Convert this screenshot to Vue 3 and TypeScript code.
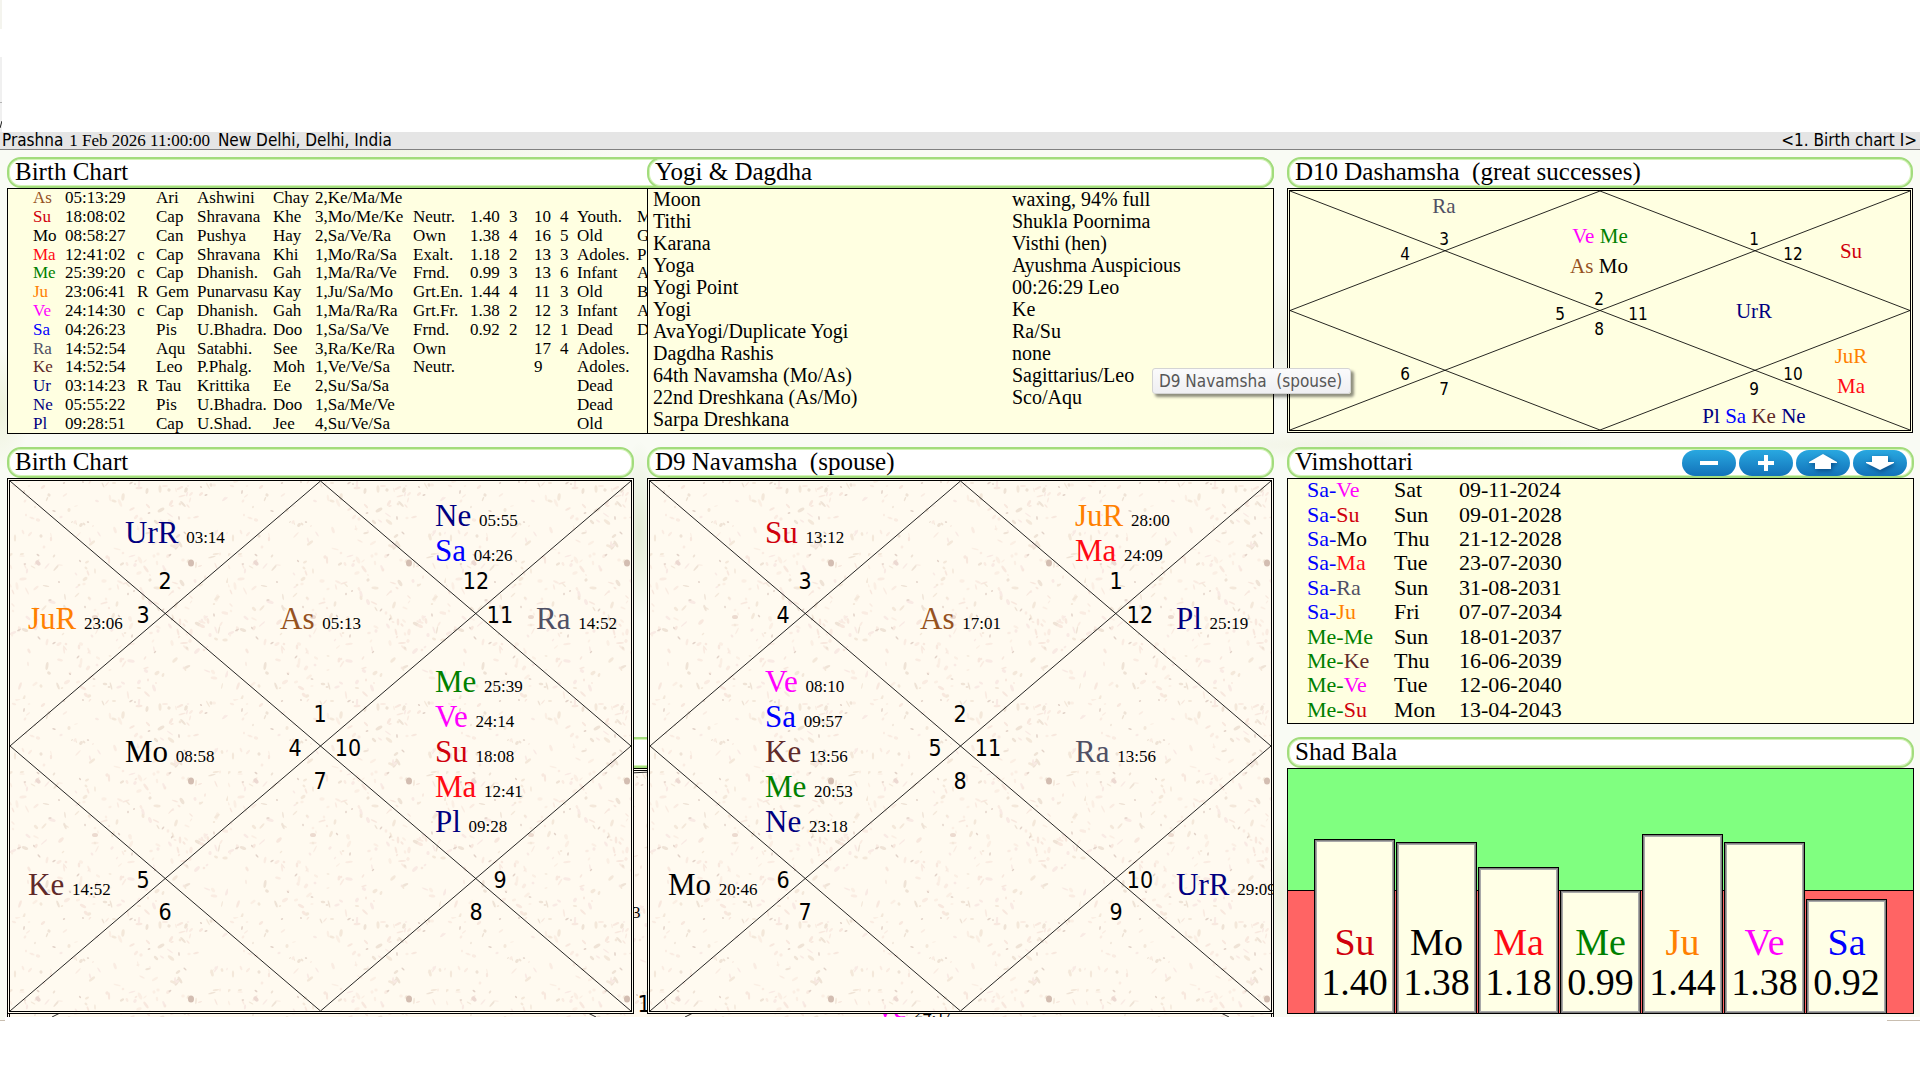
<script setup lang="ts">
type Graha = 'As' | 'Su' | 'Mo' | 'Ma' | 'Me' | 'Ju' | 'Ve' | 'Sa' | 'Ra' | 'Ke' | 'Ur' | 'Ne' | 'Pl'

interface Label {
  x: number
  y: number
  parts: { name: string; degree?: string }[]
}

interface Chart {
  title: string
  area: string
  size: 'large' | 'small'
  lagna: number
  labels: Label[]
}

const planetRows: string[][] = [
  ['As', '05:13:29', '', 'Ari', 'Ashwini', 'Chay', '2,Ke/Ma/Me', '', '', '', '', '', '', ''],
  ['Su', '18:08:02', '', 'Cap', 'Shravana', 'Khe', '3,Mo/Me/Ke', 'Neutr.', '1.40', '3', '10', '4', 'Youth.', 'M'],
  ['Mo', '08:58:27', '', 'Can', 'Pushya', 'Hay', '2,Sa/Ve/Ra', 'Own', '1.38', '4', '16', '5', 'Old', 'G'],
  ['Ma', '12:41:02', 'c', 'Cap', 'Shravana', 'Khi', '1,Mo/Ra/Sa', 'Exalt.', '1.18', '2', '13', '3', 'Adoles.', 'P'],
  ['Me', '25:39:20', 'c', 'Cap', 'Dhanish.', 'Gah', '1,Ma/Ra/Ve', 'Frnd.', '0.99', '3', '13', '6', 'Infant', 'A'],
  ['Ju', '23:06:41', 'R', 'Gem', 'Punarvasu', 'Kay', '1,Ju/Sa/Mo', 'Grt.En.', '1.44', '4', '11', '3', 'Old', 'B'],
  ['Ve', '24:14:30', 'c', 'Cap', 'Dhanish.', 'Gah', '1,Ma/Ra/Ra', 'Grt.Fr.', '1.38', '2', '12', '3', 'Infant', 'A'],
  ['Sa', '04:26:23', '', 'Pis', 'U.Bhadra.', 'Doo', '1,Sa/Sa/Ve', 'Frnd.', '0.92', '2', '12', '1', 'Dead', 'D'],
  ['Ra', '14:52:54', '', 'Aqu', 'Satabhi.', 'See', '3,Ra/Ke/Ra', 'Own', '', '', '17', '4', 'Adoles.', ''],
  ['Ke', '14:52:54', '', 'Leo', 'P.Phalg.', 'Moh', '1,Ve/Ve/Sa', 'Neutr.', '', '', '9', '', 'Adoles.', ''],
  ['Ur', '03:14:23', 'R', 'Tau', 'Krittika', 'Ee', '2,Su/Sa/Sa', '', '', '', '', '', 'Dead', ''],
  ['Ne', '05:55:22', '', 'Pis', 'U.Bhadra.', 'Doo', '1,Sa/Me/Ve', '', '', '', '', '', 'Dead', ''],
  ['Pl', '09:28:51', '', 'Cap', 'U.Shad.', 'Jee', '4,Su/Ve/Sa', '', '', '', '', '', 'Old', ''],
]

const yogiRows: [string, string][] = [
  ['Moon', 'waxing, 94% full'],
  ['Tithi', 'Shukla Poornima'],
  ['Karana', 'Visthi (hen)'],
  ['Yoga', 'Ayushma Auspicious'],
  ['Yogi Point', '00:26:29 Leo'],
  ['Yogi', 'Ke'],
  ['AvaYogi/Duplicate Yogi', 'Ra/Su'],
  ['Dagdha Rashis', 'none'],
  ['64th Navamsha (Mo/As)', 'Sagittarius/Leo'],
  ['22nd Dreshkana (As/Mo)', 'Sco/Aqu'],
  ['Sarpa Dreshkana', ''],
]

const dashas: { major: Graha; minor: Graha; day: string; date: string }[] = [
  { major: 'Sa', minor: 'Ve', day: 'Sat', date: '09-11-2024' },
  { major: 'Sa', minor: 'Su', day: 'Sun', date: '09-01-2028' },
  { major: 'Sa', minor: 'Mo', day: 'Thu', date: '21-12-2028' },
  { major: 'Sa', minor: 'Ma', day: 'Tue', date: '23-07-2030' },
  { major: 'Sa', minor: 'Ra', day: 'Sun', date: '31-08-2031' },
  { major: 'Sa', minor: 'Ju', day: 'Fri', date: '07-07-2034' },
  { major: 'Me', minor: 'Me', day: 'Sun', date: '18-01-2037' },
  { major: 'Me', minor: 'Ke', day: 'Thu', date: '16-06-2039' },
  { major: 'Me', minor: 'Ve', day: 'Tue', date: '12-06-2040' },
  { major: 'Me', minor: 'Su', day: 'Mon', date: '13-04-2043' },
]

const strengths: { graha: Graha; value: number }[] = [
  { graha: 'Su', value: 1.4 },
  { graha: 'Mo', value: 1.38 },
  { graha: 'Ma', value: 1.18 },
  { graha: 'Me', value: 0.99 },
  { graha: 'Ju', value: 1.44 },
  { graha: 'Ve', value: 1.38 },
  { graha: 'Sa', value: 0.92 },
]
const strengthMax = 1.968

const hint = 'D9 Navamsha  (spouse)'

/* Chart coordinates are given on these canvases and drawn as percentages. */
const canvas = { large: { w: 621, h: 530 }, small: { w: 620, h: 239 } }

/* Number positions of houses 1 to 12. */
const houseSlots: Record<'large' | 'small', [number, number][]> = {
  large: [
    [310, 241], [155, 108], [133, 142], [285, 275], [133, 407], [155, 439],
    [310, 308], [466, 439], [490, 407], [338, 275], [490, 142], [466, 108],
  ],
  small: [
    [309, 114], [154, 54], [115, 69], [270, 129], [115, 189], [154, 204],
    [309, 144], [464, 204], [503, 189], [348, 129], [503, 69], [464, 54],
  ],
}

const one = (x: number, y: number, name: string, degree: string): Label => ({ x, y, parts: [{ name, degree }] })
const group = (x: number, y: number, ...names: string[]): Label => ({ x, y, parts: names.map((name) => ({ name })) })

const charts: Chart[] = [
  {
    title: 'Birth Chart',
    area: 'rashi',
    size: 'large',
    lagna: 1,
    labels: [
      one(115, 62, 'UrR', '03:14'),
      one(425, 45, 'Ne', '05:55'),
      one(425, 80, 'Sa', '04:26'),
      one(18, 148, 'JuR', '23:06'),
      one(270, 148, 'As', '05:13'),
      one(526, 148, 'Ra', '14:52'),
      one(425, 211, 'Me', '25:39'),
      one(425, 246, 'Ve', '24:14'),
      one(425, 281, 'Su', '18:08'),
      one(425, 316, 'Ma', '12:41'),
      one(425, 351, 'Pl', '09:28'),
      one(115, 281, 'Mo', '08:58'),
      one(18, 414, 'Ke', '14:52'),
    ],
  },
  {
    title: 'D9 Navamsha  (spouse)',
    area: 'navamsha',
    size: 'large',
    lagna: 2,
    labels: [
      one(115, 62, 'Su', '13:12'),
      one(425, 45, 'JuR', '28:00'),
      one(425, 80, 'Ma', '24:09'),
      one(270, 148, 'As', '17:01'),
      one(526, 148, 'Pl', '25:19'),
      one(115, 211, 'Ve', '08:10'),
      one(115, 246, 'Sa', '09:57'),
      one(115, 281, 'Ke', '13:56'),
      one(115, 316, 'Me', '20:53'),
      one(115, 351, 'Ne', '23:18'),
      one(425, 281, 'Ra', '13:56'),
      one(18, 414, 'Mo', '20:46'),
      one(526, 414, 'UrR', '29:09'),
    ],
  },
  {
    title: 'D10 Dashamsha  (great successes)',
    area: 'dashamsha',
    size: 'small',
    lagna: 2,
    labels: [
      group(154, 22, 'Ra'),
      group(310, 52, 'Ve', 'Me'),
      group(309, 82, 'As', 'Mo'),
      group(561, 67, 'Su'),
      group(464, 127, 'UrR'),
      group(561, 172, 'JuR'),
      group(561, 202, 'Ma'),
      group(464, 232, 'Pl', 'Sa', 'Ke', 'Ne'),
    ],
  },
]

const px = (chart: Chart, x: number) => `${(x / canvas[chart.size].w) * 100}%`
const py = (chart: Chart, y: number) => `${(y / canvas[chart.size].h) * 100}%`
const sign = (chart: Chart, house: number) => ((chart.lagna - 1 + house) % 12) + 1
const tone = (name: string) => `g-${name.slice(0, 2).toLowerCase()}`

const chartLines: [string, string, string, string][] = [
  ['0%', '0%', '100%', '100%'],
  ['100%', '0%', '0%', '100%'],
  ['50%', '0%', '100%', '50%'],
  ['100%', '50%', '50%', '100%'],
  ['50%', '100%', '0%', '50%'],
  ['0%', '50%', '50%', '0%'],
]

/* Speckles of the stone tile, the same on every load. */
const tile = 218
let seed = 71
const next = () => {
  seed = (seed * 16807) % 2147483647
  return seed / 2147483647
}
const inks = ['#faece2', '#f8e8de', '#fbefe4', '#f4e8da', '#f9eae4', '#efe3d6']
const specks = Array.from({ length: 330 }, () => ({
  x: Math.round(next() * tile),
  y: Math.round(next() * tile),
  rx: 1 + next() * 3,
  ry: 0.6 + next() * 1.1,
  turn: Math.round(next() * 180),
  ink: inks[Math.floor(next() * inks.length)],
}))
const grains = Array.from({ length: 34 }, () => ({
  x: Math.round(next() * tile),
  y: Math.round(next() * tile),
  rx: 0.8 + next() * 1.4,
  turn: Math.round(next() * 180),
}))
</script>

<template>
  <div class="window">
    <div class="top">
      <div class="top-sliver">
        <svg width="2" height="8" viewBox="0 0 2 8"><path d="M0 8L2 1" stroke="#222" /></svg>
      </div>
    </div>

    <div class="status">
      <span>Prashna</span>
      <time class="serif">1 Feb 2026 11:00:00</time>
      <span>New Delhi, Delhi, India</span>
      <span class="page-name">&lt;1. Birth chart I&gt;</span>
    </div>

    <svg class="defs" width="0" height="0" aria-hidden="true">
      <defs>
        <pattern id="stone" :width="tile" :height="tile" patternUnits="userSpaceOnUse">
          <rect :width="tile" :height="tile" fill="#fffaf0" />
          <ellipse
            v-for="(s, i) in specks"
            :key="i"
            :cx="s.x"
            :cy="s.y"
            :rx="s.rx"
            :ry="s.ry"
            :fill="s.ink"
            :transform="`rotate(${s.turn} ${s.x} ${s.y})`"
          />
          <ellipse
            v-for="(s, i) in grains"
            :key="`g${i}`"
            :cx="s.x"
            :cy="s.y"
            :rx="s.rx"
            ry="0.8"
            fill="#e2d2c8"
            :transform="`rotate(${s.turn} ${s.x} ${s.y})`"
          />
          <ellipse cx="181" cy="82" rx="3" ry="3.5" fill="#d3bdb1" />
          <ellipse cx="28" cy="82" rx="3" ry="2" fill="#ecd9d2" transform="rotate(50 28 82)" />
          <ellipse cx="85" cy="136" rx="3" ry="2" fill="#ecdacf" />
        </pattern>
      </defs>
    </svg>

    <main class="board">
      <section class="panel planets">
        <h2 class="title">Birth Chart</h2>
        <div class="body cream">
          <table class="planet-table">
            <colgroup>
              <col class="c-name" /><col class="c-deg" /><col class="c-flag" /><col class="c-sign" />
              <col class="c-nak" /><col class="c-syl" /><col class="c-lord" /><col class="c-dig" />
              <col class="c-bala" /><col class="c-kar" /><col class="c-pts" /><col class="c-pts2" />
              <col class="c-age" /><col />
            </colgroup>
            <tbody>
              <tr v-for="row in planetRows" :key="row[0]">
                <td v-for="(cell, i) in row" :key="i" :class="i === 0 ? tone(cell) : ''">{{ cell }}</td>
              </tr>
            </tbody>
          </table>
        </div>
      </section>

      <section class="panel yogi">
        <h2 class="title">Yogi &amp; Dagdha</h2>
        <div class="body cream">
          <table class="yogi-table">
            <tbody>
              <tr v-for="[name, value] in yogiRows" :key="name">
                <td>{{ name }}</td>
                <td>{{ value }}</td>
              </tr>
            </tbody>
          </table>
        </div>
      </section>

      <section class="panel covered">
        <div class="title"></div>
        <div class="body double">
          <svg class="chart" aria-hidden="true">
            <rect width="100%" height="100%" fill="url(#stone)" />
            <text class="degree" x="622" y="147">3</text>
            <text class="house" x="634" y="241">1</text>
            <text class="graha g-ve" x="864" y="247">Ve <tspan class="degree">24:17</tspan></text>
            <path class="lines" d="M42 246L50 242M578 242L586 246M675 246L683 242M1211 242L1219 246M620 2L640 1" />
          </svg>
        </div>
      </section>

      <section v-for="chart in charts" :key="chart.title" class="panel" :class="chart.area">
        <h2 class="title">{{ chart.title }}</h2>
        <div class="body double">
          <svg class="chart" :class="chart.size" role="img" :aria-label="chart.title">
            <rect v-if="chart.size === 'large'" width="100%" height="100%" fill="url(#stone)" />
            <g class="lines">
              <line v-for="(l, i) in chartLines" :key="i" :x1="l[0]" :y1="l[1]" :x2="l[2]" :y2="l[3]" />
            </g>
            <text
              v-for="([x, y], i) in houseSlots[chart.size]"
              :key="i"
              class="house"
              :x="px(chart, x)"
              :y="py(chart, y)"
            >{{ sign(chart, i) }}</text>
            <text
              v-for="(label, i) in chart.labels"
              :key="`l${i}`"
              class="graha"
              :x="px(chart, label.x)"
              :y="py(chart, label.y)"
            ><template v-for="(part, j) in label.parts" :key="j"><tspan :class="tone(part.name)">{{ (j > 0 ? ' ' : '') + part.name }}</tspan><template v-if="part.degree">{{ ' ' }}<tspan class="degree">{{ part.degree }}</tspan></template></template></text>
          </svg>
        </div>
      </section>

      <section class="panel dasha">
        <div class="title">
          <h2>Vimshottari</h2>
          <div class="tools">
            <button type="button" aria-label="Collapse">
              <svg viewBox="0 0 54 26"><path d="M18 11h18v4H18z" /></svg>
            </button>
            <button type="button" aria-label="Expand">
              <svg viewBox="0 0 54 26"><path d="M25 5h4v6h6v4h-6v6h-4v-6h-6v-4h6z" /></svg>
            </button>
            <button type="button" aria-label="Previous">
              <svg class="raised" viewBox="0 0 54 26"><path d="M27 4l14 8v1h-6v6H19v-6h-6v-1z" /></svg>
            </button>
            <button type="button" aria-label="Next">
              <svg class="raised" viewBox="0 0 54 26"><path d="M19 6h16v6h6v1l-14 7-14-7v-1h6z" /></svg>
            </button>
          </div>
        </div>
        <div class="body cream">
          <table class="dasha-table">
            <tbody>
              <tr v-for="d in dashas" :key="d.date">
                <td><span :class="tone(d.major)">{{ d.major }}-</span><span :class="tone(d.minor)">{{ d.minor }}</span></td>
                <td>{{ d.day }}</td>
                <td>{{ d.date }}</td>
              </tr>
            </tbody>
          </table>
        </div>
      </section>

      <section class="panel bala">
        <h2 class="title">Shad Bala</h2>
        <div class="body bars">
          <div
            v-for="s in strengths"
            :key="s.graha"
            class="bar"
            :style="{ height: `${(s.value / strengthMax) * 100}%` }"
          >
            <span :class="tone(s.graha)">{{ s.graha }}</span>
            <span>{{ s.value.toFixed(2) }}</span>
          </div>
        </div>
      </section>

      <div class="tooltip" role="tooltip">{{ hint }}</div>
    </main>

    <div class="tail"><i></i><i></i></div>
  </div>
</template>

<style>
body {
  margin: 0;
  background: #fff;
}
</style>

<style scoped>
.window {
  font-family: 'Liberation Serif', 'Times New Roman', serif;
  color: #000;
  background: #fff;
}

.top {
  height: 132px;
}

.top-sliver {
  display: flex;
  align-items: flex-end;
  box-sizing: border-box;
  width: 2px;
  height: 132px;
  padding-bottom: 4px;
  background: linear-gradient(#f4f4ee 29px, #fff 29px 57px, #f0f0f0 57px 102px, #b4b4b4 102px 103px, #f0f0f0 103px);
}

.status {
  display: flex;
  align-items: center;
  height: 17px;
  padding: 0 3px 0 2px;
  border-bottom: 1px solid #808080;
  background: #e5e5e5;
  font-family: 'DejaVu Sans Condensed', 'Noto Sans', sans-serif;
  font-size: 17px;
  line-height: 17px;
  white-space: pre;
}

.status .serif {
  margin: 0 8px 0 6px;
  font-family: 'Liberation Serif', serif;
  font-size: 17px;
}

.page-name {
  margin-left: auto;
}

.defs {
  position: absolute;
}

.board {
  position: relative;
  display: grid;
  grid-template-columns: repeat(3, minmax(0, 1fr));
  grid-template-rows: repeat(3, 277px);
  gap: 13px;
  padding: 7px 6px 3px 7px;
  background:
    radial-gradient(ellipse 30px 60px at 0 30%, #eef3dc, transparent),
    radial-gradient(ellipse 20px 90px at 33.3% 44%, #e2ead4, transparent),
    radial-gradient(ellipse 24px 70px at 66.7% 22%, #eef1e4, transparent),
    radial-gradient(ellipse 24px 80px at 66.7% 86%, #edf2e0, transparent),
    radial-gradient(ellipse 240px 16px at 20% 0, #f1f5e4, transparent),
    radial-gradient(ellipse 260px 16px at 70% 34%, #f2f4e6, transparent),
    #f9fbf4;
}

.panel {
  display: flex;
  flex-direction: column;
  min-width: 0;
  z-index: 1;
}

.planets {
  grid-area: 1 / 1 / 2 / 3;
}

.yogi {
  grid-area: 1 / 2 / 2 / 3;
}

.dashamsha {
  grid-area: 1 / 3 / 2 / 4;
  margin: 0 1px 1px 0;
}

.rashi {
  grid-area: 2 / 1 / 4 / 2;
}

.navamsha {
  grid-area: 2 / 2 / 4 / 3;
}

.dasha {
  grid-area: 2 / 3 / 3 / 4;
}

.bala {
  grid-area: 3 / 3 / 4 / 4;
}

.covered {
  grid-area: 3 / 1 / 4 / 3;
  margin-bottom: -3px;
  z-index: 0;
}

.title {
  box-sizing: border-box;
  display: flex;
  align-items: center;
  flex: none;
  height: 31px;
  margin: 0;
  padding: 0 5px 0 6px;
  border: 2px solid #a2dc7c;
  border-radius: 14px;
  background: #fff;
  box-shadow: inset 0 0 0 1px #d3f3b6;
  font-size: 25px;
  font-weight: 400;
  line-height: 23px;
  white-space: pre;
}

h2.title {
  padding-bottom: 2px;
}

.title h2 {
  margin: 0;
  padding-bottom: 2px;
  font: inherit;
}

.body {
  box-sizing: border-box;
  flex: 1;
  min-height: 0;
  border: 1px solid #000;
  overflow: hidden;
}

.cream {
  background: #ffffe1;
}

.double {
  border: 3px double #000;
  background: #fffbee;
  overflow: clip;
  overflow-clip-margin: border-box;
}

.covered .body {
  border-bottom: 0;
}

.dashamsha .double {
  background: #ffffe1;
}

table {
  width: 100%;
  border-collapse: collapse;
}

td {
  padding: 0;
  white-space: pre;
}

.planet-table {
  table-layout: fixed;
  height: 100%;
  font-size: 17px;
  line-height: 18px;
}

.planet-table td:first-child {
  padding-left: 25px;
}

.c-name { width: 57px; }
.c-deg { width: 72px; }
.c-flag { width: 19px; }
.c-sign { width: 41px; }
.c-nak { width: 76px; }
.c-syl { width: 42px; }
.c-lord { width: 98px; }
.c-dig { width: 57px; }
.c-bala { width: 39px; }
.c-kar { width: 25px; }
.c-pts { width: 26px; }
.c-pts2 { width: 17px; }
.c-age { width: 60px; }

.yogi-table {
  font-size: 20px;
  line-height: 20px;
}

.yogi-table td {
  padding-bottom: 2px;
}

.yogi-table td:first-child {
  width: 359px;
  padding-left: 5px;
}

.dasha-table {
  height: 100%;
  font-size: 22px;
  line-height: 22px;
}

.dasha-table td {
  padding-bottom: 2px;
}

.dasha-table td:first-child {
  width: 87px;
  padding-left: 19px;
}

.dasha-table td:nth-child(2) {
  width: 65px;
}

.chart {
  display: block;
  width: 100%;
  height: 100%;
  overflow: visible;
}

.lines {
  fill: none;
  stroke: #000;
  stroke-width: 1px;
  stroke-opacity: 0.85;
}

.house {
  font-family: 'DejaVu Sans Condensed', 'Noto Sans', sans-serif;
  font-size: 23px;
  text-anchor: middle;
}

.graha {
  font-size: 31px;
  white-space: pre;
}

.degree {
  fill: #000;
  font-size: 17px;
}

.small .house {
  font-size: 17px;
}

.small .graha {
  font-size: 21px;
  text-anchor: middle;
}

.tools {
  display: flex;
  gap: 3px;
  margin-left: auto;
}

.tools button {
  width: 54px;
  height: 26px;
  padding: 0;
  border: 0;
  border-radius: 13px;
  background: linear-gradient(#29a8e0, #1272b9);
}

.tools svg {
  display: block;
  width: 54px;
  height: 26px;
  fill: #fff;
}

.tools .raised {
  filter: drop-shadow(1px 2px 2px #0a4c86);
}

.bars {
  display: flex;
  align-items: flex-end;
  gap: 1px;
  padding: 0 26px;
  background: linear-gradient(#80ff80 calc(50% - 1px), #000 calc(50% - 1px) 50%, #ff6464 50%);
}

.bar {
  box-sizing: border-box;
  display: flex;
  flex: 1;
  flex-direction: column;
  align-items: center;
  justify-content: flex-end;
  min-width: 0;
  padding-bottom: 11px;
  border: 1px solid #000;
  border-bottom: 0;
  background: #ffffe6;
  box-shadow: inset 0 0 0 1px #808080, inset 0 0 0 2px #a8a8a8;
  font-size: 38px;
  line-height: 40px;
}

.tooltip {
  position: absolute;
  left: 60%;
  top: 218px;
  z-index: 2;
  box-sizing: border-box;
  height: 26px;
  padding: 0 8px 0 6px;
  border: 1px solid #d4d4d4;
  border-radius: 3px;
  background: linear-gradient(#fbfbfb, #efeff2);
  box-shadow: 3px 3px 3px rgb(0 0 0 / 45%);
  color: #575757;
  font-family: 'DejaVu Sans Condensed', 'Noto Sans', sans-serif;
  font-size: 17px;
  line-height: 24px;
  white-space: pre;
}

.tail {
  display: flex;
  justify-content: space-between;
}

.tail i {
  width: 5px;
  height: 3px;
  border-bottom: 1px solid #c9beb0;
  background: #f9fbf4;
}

.tail i:last-child {
  width: 33px;
  background: #fff;
}

.g-as { color: #96521f; fill: #96521f; }
.g-su { color: #d0000c; fill: #d0000c; }
.g-mo { color: #000; fill: #000; }
.g-ma { color: #ff0a14; fill: #ff0a14; }
.g-me { color: #008000; fill: #008000; }
.g-ju { color: #ff8000; fill: #ff8000; }
.g-ve { color: #f0f; fill: #f0f; }
.g-sa { color: #00f; fill: #00f; }
.g-ra { color: #505064; fill: #505064; }
.g-ke { color: #602a2a; fill: #602a2a; }
.g-ur,
.g-ne,
.g-pl { color: #000080; fill: #000080; }
</style>
